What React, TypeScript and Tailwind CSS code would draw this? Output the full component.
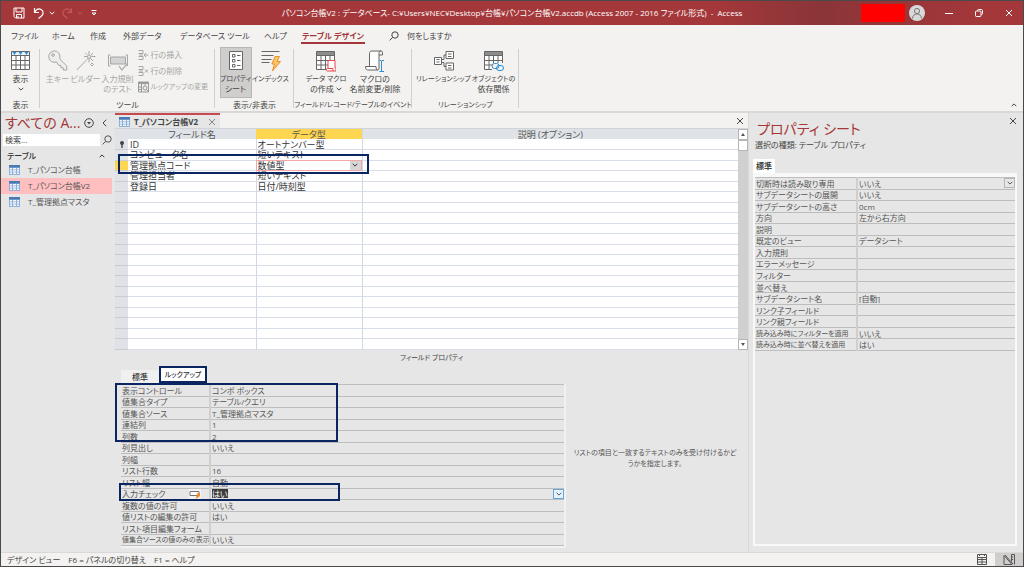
import { useState } from "react";
import type { ReactNode } from "react";
import clsx from "clsx";

interface Property {
    name: string;
    value: string;
    active?: boolean;
    dropdown?: boolean;
}

const menuTabs = [
    { label: "ファイル", width: "w-[41px]" },
    { label: "ホーム", width: "w-[38px]" },
    { label: "作成", width: "w-[33px]" },
    { label: "外部データ", width: "w-[57px]" },
    { label: "データベース ツール", width: "w-[84px]" },
    { label: "ヘルプ", width: "w-[37px]" },
];

const navItems = ["T_パソコン台帳", "T_パソコン台帳V2", "T_管理拠点マスタ"];

const fields = [
    { name: "ID", type: "オートナンバー型" },
    { name: "コンピュータ名", type: "短いテキスト" },
    { name: "管理拠点コード", type: "数値型" },
    { name: "管理担当者", type: "短いテキスト" },
    { name: "登録日", type: "日付/時刻型" },
];

const lookupProperties: Property[] = [
    { name: "表示コントロール", value: "コンボ ボックス" },
    { name: "値集合タイプ", value: "テーブル/クエリ" },
    { name: "値集合ソース", value: "T_管理拠点マスタ" },
    { name: "連結列", value: "1" },
    { name: "列数", value: "2" },
    { name: "列見出し", value: "いいえ" },
    { name: "列幅", value: "" },
    { name: "リスト行数", value: "16" },
    { name: "リスト幅", value: "自動" },
    { name: "入力チェック", value: "はい", active: true },
    { name: "複数の値の許可", value: "いいえ" },
    { name: "値リストの編集の許可", value: "はい" },
    { name: "リスト項目編集フォーム", value: "" },
    { name: "値集合ソースの値のみの表示", value: "いいえ" },
];

const tableProperties: Property[] = [
    { name: "切断時は読み取り専用", value: "いいえ", dropdown: true },
    { name: "サブデータシートの展開", value: "いいえ" },
    { name: "サブデータシートの高さ", value: "0cm" },
    { name: "方向", value: "左から右方向" },
    { name: "説明", value: "" },
    { name: "既定のビュー", value: "データシート" },
    { name: "入力規則", value: "" },
    { name: "エラーメッセージ", value: "" },
    { name: "フィルター", value: "" },
    { name: "並べ替え", value: "" },
    { name: "サブデータシート名", value: "[自動]" },
    { name: "リンク子フィールド", value: "" },
    { name: "リンク親フィールド", value: "" },
    { name: "読み込み時にフィルターを適用", value: "いいえ" },
    { name: "読み込み時に並べ替えを適用", value: "はい" },
];

// long kana labels are set one size smaller
const longKana = /^[ァ-ヶー の]{5,}$/;

function Chevron({ up, className }: { up?: boolean; className?: string }) {
    return (
        <svg viewBox="0 0 6 4" className={clsx("h-1 w-1.5 shrink-0", className)} fill="none" stroke="currentColor">
            <path d={up ? "M.7 3.2 3 .9l2.3 2.3" : "M.7.8 3 3.1 5.3.8"} />
        </svg>
    );
}

function Close({ className }: { className?: string }) {
    return (
        <svg viewBox="0 0 8 8" className={clsx("size-2", className)} fill="none" stroke="currentColor">
            <path d="m1 1 6 6M7 1 1 7" />
        </svg>
    );
}

function Magnifier({ className }: { className?: string }) {
    return (
        <svg viewBox="0 0 10 10" className={clsx("size-2.5 shrink-0", className)} fill="none" stroke="currentColor">
            <circle cx="6" cy="4" r="3.2" />
            <path d="M3.7 6.3.6 9.4" />
        </svg>
    );
}

function GridIcon({ children, header }: { children?: ReactNode; header?: string }) {
    return (
        <svg viewBox="0 0 20 22" className="h-[22px] w-5" fill="none">
            <path d="M.5 1.5h18v18H.5z" fill="#fff" />
            <path d="M.5 1.5h18v4H.5z" fill={header ?? "#8d8d8d"} />
            <path d="M.5 1.500h18v18H.5zM.5 5.500h18M.5 10.500h18M.5 15h18M5 5.500v14M9.500 5.500v14M14 5.500v14" stroke="#666" />
            {header && <path d="M1.500 2h4L3.500 5zM7.500 2h4l-2 3zM13.500 2h4l-2 3z" fill="#2b8fd6" />}
            {children}
        </svg>
    );
}

function ViewIcon() {
    return <GridIcon header="#e9f3fa" />;
}

function KeyIcon() {
    return (
        <svg viewBox="0 0 20 22" className="h-[22px] w-5" fill="none" stroke="#a6a6a6">
            <path d="M8.500 11.900A5.700 5.700 0 1 1 12 7.500l-.2 1.600 7 6.900v4h-3.600v-2.300h-2.400v-2.400h-2.300z" fill="#ededec" />
            <circle cx="5" cy="5" r="1.300" />
        </svg>
    );
}

function WandIcon() {
    return (
        <svg viewBox="0 0 20 22" className="h-[22px] w-5" fill="none" stroke="#a6a6a6">
            <path d="M.8 20 11 9.500M13 1v3M13 9v3.500M8 6.500h3M15.500 6.500h4M9.500 3l1.500 1.500M17 3l-2 2M15 9l2 2" />
            <path d="m13 4.500.8 1.300 1.500.3-1.100 1 .3 1.600-1.500-.7-1.500.7.3-1.600-1-1 1.500-.3z" />
            <path d="m16 13 1.500 1.500L16 16l-1.500-1.500z" />
        </svg>
    );
}

function ValidationIcon() {
    return (
        <svg viewBox="0 0 20 22" className="h-[22px] w-5" fill="none" stroke="#a6a6a6">
            <path d="M2.500 7h15v7h-15z" fill="#d4d4d4" />
            <path d="M.5 5v11M19.500 5v11M.5 5h2M.5 16h2M17.500 5h2M17.500 16h1" />
            <path d="m11 16 3 4 5.500-7" strokeWidth="1.200" />
        </svg>
    );
}

function PropertySheetIcon() {
    return (
        <svg viewBox="0 0 20 22" className="h-[22px] w-5" fill="none" stroke="#666">
            <path d="M3.500 1.500h13v18h-13z" fill="#fff" />
            <path d="M6.500 4.500H9V7H6.500zM6.500 9.500H9V12H6.500zM6.500 14.500H9V17H6.500zM11 5.500h3.500M11 10.500h3.500M11 15.500h3.500" />
        </svg>
    );
}

function IndexIcon() {
    return (
        <svg viewBox="0 0 20 22" className="h-[22px] w-5" fill="none">
            <path d="M.5 1.500h18M.5 5.500h12M.5 9.500h10M.5 12.500h8" stroke="#666" />
            <path d="M14 6.500h4.500l-2.500 5h3.500L11.500 21l2-7h-2.700z" fill="#fbc469" stroke="#e8912d" />
        </svg>
    );
}

function DataMacroIcon() {
    return (
        <GridIcon>
            <path d="M12 10.500h7v7.500h1v3h-8.500c-1.500 0-1.500-2.500 0-2.500h.5z" fill="#fff" stroke="#e8474c" />
            <path d="M12 18.500h5v2.500" stroke="#e8474c" />
        </GridIcon>
    );
}

function MacroRenameIcon() {
    return (
        <svg viewBox="0 0 20 22" className="h-[22px] w-5" fill="none" stroke="#666">
            <path d="M4.500 16.500V3.500c0-2 1-2.500 2.500-2.500h9c-1.500 0-2 1-2 2.500V18c0 1.500-.5 2-1.500 2H2.500C.5 20 .5 16.500.5 16.500H11c0 2 .5 3.500 1.500 3.500" fill="#fff" />
            <path d="M14 5h3.500V2.500c0-1-.5-1.500-1.500-1.500" />
            <path d="M16.500 11v10M14.500 10.500h1.500l.5.500.5-.5h2M14.500 21.500h4.500" stroke="#2b8fd6" />
        </svg>
    );
}

function RelationIcon() {
    return (
        <svg viewBox="0 0 20 22" className="h-[22px] w-5" fill="none" stroke="#666">
            <path d="M.5 7.500h7v7h-7zM12 1.500h7.500v7H12zM12 13h7.500v7H12z" fill="#fff" />
            <path d="M7.500 9.500h2.500V5h2M7.500 12.500h2.500v4h2M2.500 9.500h3M2.500 12h3M14 4h3.500M14 6.500h3.500M14 15.500h3.500M14 18h3.500" />
        </svg>
    );
}

function DependencyIcon() {
    return (
        <GridIcon>
            <path d="M8 13h12v8H8z" fill="#f3f2f0" />
            <rect x="8" y="13.500" width="7" height="5" rx="2.500" stroke="#2b8fd6" />
            <rect x="12.500" y="15.500" width="7" height="5" rx="2.500" stroke="#2b8fd6" />
        </GridIcon>
    );
}

function RowEditIcon({ remove }: { remove?: boolean }) {
    return (
        <svg viewBox="0 0 11 12" className="h-3 w-[11px] shrink-0" fill="none" stroke="#a6a6a6">
            <path d="M.5 1.500H5v3H.5M.5 7.500H5v3H.5M1 6h4" />
            {remove ? <path d="m7 4.500 3 3M10 4.500l-3 3" /> : <path d="M6 6h4.500M8 4 6 6l2 2" />}
        </svg>
    );
}

function LookupIcon() {
    return (
        <svg viewBox="0 0 11 12" className="h-3 w-[11px] shrink-0" fill="none" stroke="#9b9b9b">
            <path d="M.5 1h10v10H.5z" fill="#ededec" />
            <path d="M.5 2h10" strokeWidth="2" />
            <path d="M.5 6h3M.5 8.500h3M3.500 3v8M7 3v1.500" />
            <circle cx="7" cy="7" r="2" />
            <path d="m8.500 8.500 1.500 1.500" />
        </svg>
    );
}

function DatasheetIcon() {
    return (
        <svg viewBox="0 0 11 10" className="h-2.5 w-[11px] shrink-0">
            <path d="M0 0h11v10H0z" fill="#8fb0d8" />
            <path d="M0 0h11v2.500H0z" fill="#4a78b5" />
            <path d="M1 3h2v1.500H1zM4 3h3v1.500H4zM8 3h2v1.500H8zM1 5.200h2v1.500H1zM4 5.200h3v1.500H4zM8 5.200h2v1.500H8zM1 7.500h2V9H1zM4 7.500h3V9H4zM8 7.500h2V9H8z" fill="#f0f5fb" />
        </svg>
    );
}

interface RibbonButtonProps {
    icon: ReactNode;
    lines: ReactNode[];
    width: string;
    disabled?: boolean;
    pressed?: boolean;
}

function RibbonButton({ icon, lines, width, disabled, pressed }: RibbonButtonProps) {
    return (
        <button
            disabled={disabled}
            className={clsx(
                "flex h-[51px] shrink-0 flex-col items-center whitespace-nowrap pt-[3px] leading-[10px]",
                width,
                disabled && "text-[#a6a6a6]",
                pressed && "bg-[#d0cecd] outline outline-[#b9b7b6] -outline-offset-1"
            )}
        >
            {icon}
            <span className="mt-0.5 flex flex-col items-center">
                {lines.map((line, index) => (
                    <span
                        key={index}
                        className={clsx(
                            "flex h-2.5 items-center gap-0.5",
                            typeof line === "string" && longKana.test(line) && "text-[7px]"
                        )}
                    >
                        {line}
                    </span>
                ))}
            </span>
        </button>
    );
}

function RibbonGroup({ label, width, children }: { label: string; width: string; children: ReactNode }) {
    return (
        <section className={clsx("relative flex shrink-0 flex-col", width)}>
            <div className="flex h-[51px] justify-center">{children}</div>
            <h2 className={clsx("mt-px whitespace-nowrap text-center leading-3", label.length > 6 && "text-[7px]")}>
                {label}
            </h2>
            <div className="absolute right-0 top-0.5 h-[59px] w-px bg-[#d0cfce]" />
        </section>
    );
}

function TitleBar() {
    return (
        <header className="grid h-6 shrink-0 grid-cols-[1fr_auto_1fr] items-center bg-linear-to-r from-[#a4373a] from-70% via-[#8a3538] via-80% to-[#a4373a] to-96% text-white">
            <div className="flex items-center pl-3">
                <button aria-label="上書き保存">
                    <svg viewBox="0 0 12 12" className="size-3" fill="none" stroke="currentColor">
                        <path d="M1 1h10v10H2.500L1 9.500zM3 1v4h6V1M3.500 11V7.500h5V11M5 9v2" />
                    </svg>
                </button>
                <button aria-label="元に戻す" className="ml-2 flex items-center gap-1">
                    <svg viewBox="0 0 12 12" className="size-3" fill="none" stroke="currentColor" strokeWidth="1.200">
                        <path d="M1.500 1v4.500H6M1.500 5.500C3.500 2 6 1.500 8 2.500c3 1.500 2.500 5 .5 6.500L5.500 11.500" />
                    </svg>
                    <Chevron />
                </button>
                <button aria-label="やり直し" className="ml-1.5 flex items-center gap-1 text-[#c4585b]">
                    <svg viewBox="0 0 12 12" className="size-3 -scale-x-100" fill="none" stroke="currentColor" strokeWidth="1.200">
                        <path d="M1.500 1v4.500H6M1.500 5.500C3.500 2 6 1.500 8 2.500c3 1.500 2.500 5 .5 6.500L5.500 11.500" />
                    </svg>
                    <Chevron />
                </button>
                <button aria-label="クイック アクセス" className="ml-2">
                    <svg viewBox="0 0 6 6" className="size-1.5" fill="none" stroke="currentColor">
                        <path d="M.5.500h5M1 3l2 2 2-2z" />
                    </svg>
                </button>
            </div>
            <h1 className="whitespace-nowrap text-[8px] leading-3">
                パソコン台帳V2 : データベース- C:¥Users¥NEC¥Desktop¥台帳¥パソコン台帳V2.accdb (Access 2007 - 2016 ファイル形式) &nbsp;-&nbsp; Access
            </h1>
            <div className="flex items-center justify-end pr-2.5">
                <div className="h-[18px] w-11 bg-[#ff0000]" />
                <button aria-label="アカウント" className="ml-1">
                    <svg viewBox="0 0 16 16" className="size-4" fill="none" stroke="#777">
                        <circle cx="8" cy="8" r="8" fill="#d9d9d9" stroke="none" />
                        <circle cx="8" cy="6" r="2.600" />
                        <path d="M3.500 13.500c0-6 9-6 9 0" />
                    </svg>
                </button>
                <button aria-label="最小化" className="ml-5 flex size-2 items-center">
                    <span className="h-px w-full bg-white" />
                </button>
                <button aria-label="元のサイズ" className="ml-[22px]">
                    <svg viewBox="0 0 8 8" className="size-2" fill="none" stroke="currentColor">
                        <rect x=".5" y="2" width="5.500" height="5.500" rx="1" />
                        <path d="M2.500 1.500C2.500.8 3 .5 3.500.5H6C7 .5 7.500 1 7.500 2v2.500c0 .5-.3 1-1 1" />
                    </svg>
                </button>
                <button aria-label="閉じる" className="ml-[22px]">
                    <Close />
                </button>
            </div>
        </header>
    );
}

function Ribbon() {
    return (
        <div className="relative shrink-0 border-b-2 border-[#d9d8d7] bg-[#f3f2f0] text-[#444]">
            <nav className="flex h-[22px] items-center whitespace-nowrap pl-2.5 text-[8px] leading-3">
                {menuTabs.map((tab) => (
                    <button key={tab.label} className={clsx("shrink-0 text-left", tab.width)}>
                        {tab.label}
                    </button>
                ))}
                <button className="h-4 w-16 shrink-0 border-b-2 border-[#a4373a] pt-0.5 font-bold text-[#a4373a]">
                    テーブル デザイン
                </button>
                <button className="ml-6 flex items-center gap-2">
                    <Magnifier />
                    何をしますか
                </button>
            </nav>
            <div className="flex h-16 text-[8px]">
                <RibbonGroup label="表示" width="w-[39px]">
                    <RibbonButton icon={<ViewIcon />} lines={["表示", <Chevron key="c" />]} width="w-8" />
                </RibbonGroup>
                <RibbonGroup label="ツール" width="w-[175px]">
                    <RibbonButton icon={<KeyIcon />} lines={["主キー"]} width="w-7" disabled />
                    <RibbonButton icon={<WandIcon />} lines={["ビルダー"]} width="w-7" disabled />
                    <RibbonButton icon={<ValidationIcon />} lines={["入力規則", "のテスト"]} width="w-9" disabled />
                    <div className="flex w-[76px] flex-col gap-1 whitespace-nowrap pl-0.5 pt-0.5 leading-3 text-[#a6a6a6]">
                        <button disabled className="flex items-center gap-0.5">
                            <RowEditIcon />
                            行の挿入
                        </button>
                        <button disabled className="flex items-center gap-0.5">
                            <RowEditIcon remove />
                            行の削除
                        </button>
                        <button disabled className="flex items-center gap-0.5 text-[7px]">
                            <LookupIcon />
                            ルックアップの変更
                        </button>
                    </div>
                </RibbonGroup>
                <RibbonGroup label="表示/非表示" width="w-[79px]">
                    <RibbonButton icon={<PropertySheetIcon />} lines={["プロパティ", "シート"]} width="w-8" pressed />
                    <RibbonButton icon={<IndexIcon />} lines={["インデックス"]} width="w-[38px]" />
                </RibbonGroup>
                <RibbonGroup label="フィールド/レコード/テーブルのイベント" width="w-[118px]">
                    <RibbonButton
                        icon={<DataMacroIcon />}
                        lines={["データ マクロ", <>の作成 <Chevron /></>]}
                        width="w-11"
                    />
                    <RibbonButton icon={<MacroRenameIcon />} lines={["マクロの", "名前変更/削除"]} width="w-[54px]" />
                </RibbonGroup>
                <RibbonGroup label="リレーションシップ" width="w-[107px]">
                    <RibbonButton icon={<RelationIcon />} lines={["リレーションシップ"]} width="w-14" />
                    <RibbonButton icon={<DependencyIcon />} lines={["オブジェクトの", "依存関係"]} width="w-11" />
                </RibbonGroup>
            </div>
            <button aria-label="リボンを折りたたむ" className="absolute bottom-1 right-1.5">
                <Chevron up />
            </button>
        </div>
    );
}

function NavigationPane() {
    const [selected, setSelected] = useState("T_パソコン台帳V2");

    return (
        <aside className="flex w-28 shrink-0 flex-col bg-[#e6e6e6] text-[8px] text-[#555]">
            <div className="flex h-5 items-center pl-1 pr-1.5 text-[#444]">
                <h2 className="flex-1 whitespace-nowrap text-[14px] leading-5 text-[#a4373a]">すべての A...</h2>
                <button aria-label="表示の切り替え">
                    <svg viewBox="0 0 10 10" className="size-2.5" fill="none" stroke="currentColor">
                        <circle cx="5" cy="5" r="4.300" />
                        <path d="M3 4h4L5 6.500z" fill="currentColor" stroke="none" />
                    </svg>
                </button>
                <button aria-label="シャッター バーを閉じる" className="ml-2">
                    <svg viewBox="0 0 5 8" className="h-2 w-[5px]" fill="none" stroke="currentColor">
                        <path d="M4.300.700 1 4l3.300 3.300" />
                    </svg>
                </button>
            </div>
            <div className="mt-px flex h-3 items-center pl-0.5">
                <input
                    aria-label="検索"
                    placeholder="検索..."
                    className="h-3 w-[97px] bg-white px-0.5 leading-3 outline-none placeholder:text-[#444]"
                />
                <button aria-label="検索の実行" className="ml-0.5">
                    <Magnifier />
                </button>
            </div>
            <button className="flex h-[15px] items-center justify-between pl-1.5 pr-2 pt-1 font-medium leading-3 text-[#333]">
                テーブル
                <Chevron up />
            </button>
            <ul className="mt-px">
                {navItems.map((item) => (
                    <li key={item}>
                        <button
                            onClick={() => setSelected(item)}
                            className={clsx(
                                "flex h-4 w-[111px] items-center gap-2 whitespace-nowrap pl-2 leading-4",
                                item === selected && "bg-[#ffbfc1]"
                            )}
                        >
                            <DatasheetIcon />
                            {item}
                        </button>
                    </li>
                ))}
            </ul>
        </aside>
    );
}

function FieldGrid() {
    const rows = Array.from({ length: 20 }, (_, index) => fields[index]);

    return (
        <div className="relative flex min-h-[220px] flex-1 border-t border-[#d0d3d8]">
            <table className="h-full min-w-0 flex-1 table-fixed border-collapse bg-white text-[9px] leading-[9px] text-[#333]">
                <colgroup>
                    <col className="w-[13px]" />
                    <col className="w-[128px]" />
                    <col className="w-[106px]" />
                    <col />
                </colgroup>
                <thead>
                    <tr className="h-2.5 bg-[#dfe3e8] text-[#555]">
                        <th className="p-0" />
                        <th className="p-0 font-normal">フィールド名</th>
                        <th className="bg-[#ffd64f] p-0 font-normal">データ型</th>
                        <th className="border-l border-[#d0d7e5] p-0 font-normal">説明 (オプション)</th>
                    </tr>
                </thead>
                <tbody>
                    {rows.map((field, index) => (
                        <tr key={index} className="h-2.5 border-b border-[#d8deea] whitespace-nowrap">
                            <td
                                className={clsx(
                                    "border-b border-[#c9ccd2] p-0 text-center",
                                    index === 2 ? "bg-[#ffd64f]" : "bg-[#dfe3e8]"
                                )}
                            >
                                {index === 0 && (
                                    <svg viewBox="0 0 4 7" className="mx-auto h-[7px] w-1" fill="#444">
                                        <circle cx="2" cy="2" r="2" />
                                        <path d="M1.300 3h1.400v4H1.300z" />
                                    </svg>
                                )}
                            </td>
                            <td className="p-0 pl-0.5">{field?.name}</td>
                            <td
                                className={clsx(
                                    "border-x border-[#d0d7e5] p-0 pl-px",
                                    index === 2 && "outline outline-[#f3a6a8] -outline-offset-1"
                                )}
                            >
                                {index === 2 ? (
                                    <div className="relative h-[9px]">
                                        <select
                                            aria-label="データ型"
                                            className="block h-[9px] w-full appearance-none leading-[9px] outline-none"
                                        >
                                            <option>数値型</option>
                                        </select>
                                        <span className="pointer-events-none absolute right-px top-0 flex h-[9px] w-[11px] items-center justify-center bg-[#d6d6d6]">
                                            <Chevron />
                                        </span>
                                    </div>
                                ) : (
                                    field?.type
                                )}
                            </td>
                            <td className="p-0" />
                        </tr>
                    ))}
                </tbody>
            </table>
            <div className="flex w-2.5 shrink-0 flex-col bg-[#d0d0d0]">
                <button aria-label="上へ" className="flex h-[11px] items-center justify-center border border-[#b5b5b5] bg-white">
                    <svg viewBox="0 0 4 3" className="h-[3px] w-1" fill="#555">
                        <path d="m2 0 2 3H0z" />
                    </svg>
                </button>
                <div className="h-[11px] border border-[#b5b5b5] bg-white" />
                <button aria-label="下へ" className="mt-auto flex h-[11px] items-center justify-center border border-[#b5b5b5] bg-white">
                    <svg viewBox="0 0 4 3" className="h-[3px] w-1" fill="#555">
                        <path d="M0 0h4L2 3z" />
                    </svg>
                </button>
            </div>
            <div className="pointer-events-none absolute left-[3px] top-[25px] h-5 w-[251px] border-2 border-[#0b2560]" />
        </div>
    );
}

interface PropertyTableProps {
    id: string;
    rows: Property[];
    nameWidth: string;
    height: string;
}

function PropertyTable({ id, rows, nameWidth, height }: PropertyTableProps) {
    return (
        <table className={clsx("w-full table-fixed border-collapse text-[8px] leading-[9px] text-[#555]", height)}>
            <colgroup>
                <col className={nameWidth} />
                <col />
            </colgroup>
            <tbody>
                {rows.map((row, index) => (
                    <tr key={row.name} className="border-y border-[#bdbdbd]">
                        <th className="overflow-hidden whitespace-nowrap border-r-2 border-[#cfcfcf] p-0 pl-px text-left font-normal">
                            <div className="flex h-[9px] items-center justify-between">
                                <label htmlFor={`${id}-${index}`} className={clsx(row.name.length > 12 && "text-[7px]")}>
                                    {row.name}
                                </label>
                                {row.active && (
                                    <svg viewBox="0 0 12 10" className="mr-2 h-2.5 w-3" fill="none">
                                        <path d="M0 0h12v10H0z" fill="#f5f5f5" />
                                        <path d="M1 2.500h9v4H1z" stroke="#777" fill="#fff" />
                                        <path d="M8.500 4h2.500v3L7 10l.5-3z" fill="#f08a24" />
                                    </svg>
                                )}
                            </div>
                        </th>
                        <td className="p-0 pl-px">
                            <div className="flex h-[9px] items-center justify-between">
                                <input
                                    id={`${id}-${index}`}
                                    defaultValue={row.value}
                                    className={clsx(
                                        "h-[9px] min-w-0 leading-[9px] outline-none",
                                        row.active ? "field-sizing-content bg-[#3c3c3c] text-white" : "flex-1"
                                    )}
                                />
                                {(row.active || row.dropdown) && (
                                    <button
                                        aria-label={`${row.name}の一覧`}
                                        className={clsx(
                                            "flex h-2.5 w-[11px] shrink-0 items-center justify-center border",
                                            row.active ? "border-[#5fa6dd] bg-[#e5f1fb]" : "border-[#b5b5b5] bg-[#e6e6e6]"
                                        )}
                                    >
                                        <Chevron />
                                    </button>
                                )}
                            </div>
                        </td>
                    </tr>
                ))}
            </tbody>
        </table>
    );
}

function FieldProperties() {
    return (
        <section className="shrink-0 pb-1">
            <h2 className="pt-0.5 text-center text-[7px] leading-3 text-[#444]">フィールド プロパティ</h2>
            <div className="flex pl-1.5 pr-1">
                <div className="min-w-0 flex-1">
                    <div role="tablist" className="mt-0.5 flex h-[17px] items-end text-[8px] leading-3 text-[#333]">
                        <button role="tab" className="h-[13px] w-[38px] bg-[#f0f0f0] font-medium">
                            標準
                        </button>
                        <button
                            role="tab"
                            aria-selected="true"
                            className="h-[17px] w-12 whitespace-nowrap border-2 border-[#0b2560] bg-white text-[7px] font-medium"
                        >
                            ルックアップ
                        </button>
                    </div>
                    <div className="relative mt-px border-b-2 border-r-2 border-[#f2f2f2]">
                        <PropertyTable id="lookup" rows={lookupProperties} nameWidth="w-[89px]" height="h-[162px]" />
                        <div className="pointer-events-none absolute -left-1.5 -top-px h-[59px] w-[223px] border-2 border-[#0b2560]" />
                        <div className="pointer-events-none absolute -left-0.5 top-[99px] h-[18px] w-[221px] border-2 border-[#0b2560]" />
                    </div>
                </div>
                <p className="flex w-[178px] shrink-0 items-center px-1.5 pt-1 text-center text-[7px] leading-[11px] text-[#555]">
                    リストの項目と一致するテキストのみを受け付けるかどうかを指定します。
                </p>
            </div>
        </section>
    );
}

function DocumentArea() {
    return (
        <main className="ml-0.5 flex min-w-0 flex-1 flex-col bg-[#e6e6e6]">
            <div className="flex h-[15px] shrink-0 items-stretch justify-between bg-[#f3f2f0]">
                <div className="flex w-[105px] items-center gap-1 whitespace-nowrap border-t-2 border-[#c74a4e] bg-[#e6e6e6] pl-1 text-[8px] font-bold leading-3 text-[#444]">
                    <DatasheetIcon />
                    T_パソコン台帳V2
                    <button aria-label="タブを閉じる" className="ml-auto mr-1 text-[#888]">
                        <Close />
                    </button>
                </div>
                <button aria-label="ドキュメントを閉じる" className="mr-1 text-[#444]">
                    <Close className="size-1.5" />
                </button>
            </div>
            <FieldGrid />
            <FieldProperties />
        </main>
    );
}

function PropertySheet() {
    return (
        <aside className="flex w-[275px] shrink-0 flex-col border-l border-[#d9d9d9] bg-[#e6e6e6] pb-1.5 pl-1 pr-1.5 text-[8px] text-[#444]">
            <div className="flex items-start justify-between">
                <h2 className="pl-1 pt-1.5 text-[14px] leading-5 text-[#a4373a]">プロパティ シート</h2>
                <button aria-label="プロパティ シートを閉じる" className="pt-1">
                    <Close />
                </button>
            </div>
            <p className="pl-0.5 leading-3">選択の種類: テーブル プロパティ</p>
            <button className="mt-2 h-3.5 w-[22px] bg-white font-bold leading-3">標準</button>
            <div className="flex-1 border-2 border-t-4 border-[#f8f8f8]">
                <PropertyTable id="sheet" rows={tableProperties} nameWidth="w-[102px]" height="h-[174px]" />
            </div>
        </aside>
    );
}

function StatusBar() {
    return (
        <footer className="flex h-3.5 shrink-0 items-center border-t border-[#d9d9d9] bg-[#f3f2f0] pl-1.5 text-[8px] leading-3 text-[#444]">
            <span className="flex-1">デザイン ビュー　F6 = パネルの切り替え　F1 = ヘルプ</span>
            <button aria-label="データシート ビュー" className="mr-2">
                <svg viewBox="0 0 10 11" className="h-[11px] w-2.5" fill="none" stroke="#555">
                    <path d="M.5.500h9v10h-9zM.5 3.500h9M.5 5.500h9M.5 8h9M5 3.500v7M2.500.500v1.500M7.500.500v1.500" />
                </svg>
            </button>
            <button aria-label="デザイン ビュー" className="flex h-full w-7 items-center justify-center bg-[#d0cecd]">
                <svg viewBox="0 0 12 11" className="h-[11px] w-3" fill="none" stroke="#555">
                    <path d="M1 1.500v9h8zM2 1l8 9M8.500.500h3v10M8.500.500v7M8.500 3h1.500M8.500 5.500h1.500" />
                </svg>
            </button>
        </footer>
    );
}

export default function App() {
    return (
        <div
            lang="ja"
            className="flex h-screen min-h-[540px] flex-col overflow-hidden border border-[#4a4a4a] bg-[#e6e6e6] font-['Open_Sans','Noto_Sans_CJK_JP',sans-serif] [font-feature-settings:'palt']"
        >
            <TitleBar />
            <Ribbon />
            <div className="flex min-h-0 flex-1">
                <NavigationPane />
                <DocumentArea />
                <PropertySheet />
            </div>
            <StatusBar />
        </div>
    );
}
